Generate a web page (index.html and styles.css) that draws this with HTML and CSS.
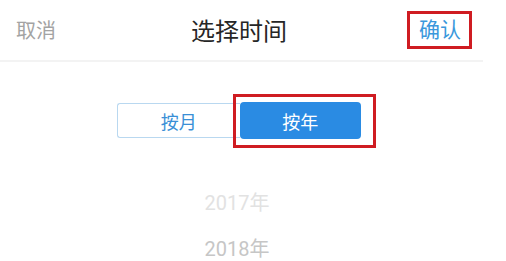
FILE: index.html
```html
<!DOCTYPE html>
<html lang="zh-CN">
<head>
<meta charset="utf-8">
<title>选择时间</title>
<link rel="stylesheet" href="styles.css">
</head>
<body>
<div class="sheet">
  <header class="bar">
    <span class="cancel">取消</span>
    <span class="title">选择时间</span>
    <span class="confirm-wrap"><span class="confirm">确认</span></span>
  </header>
  <div class="seg-row">
    <div class="seg">
      <span class="seg-item">按月</span>
      <span class="seg-item active">按年<span class="mark"></span></span>
    </div>
  </div>
  <ul class="years">
    <li class="y1">2017年</li>
    <li class="y2">2018年</li>
  </ul>
</div>
</body>
</html>
```
FILE: styles.css
```css
html, body {
  margin: 0;
  padding: 0;
  background: #ffffff;
  overflow: hidden;
}
body {
  font-family: Roboto, "Noto Sans CJK SC", sans-serif;
}
.sheet {
  width: 478px;
}
.bar {
  display: grid;
  grid-template-columns: 1fr auto 1fr;
  align-items: center;
  box-sizing: border-box;
  height: 62px;
  border-bottom: 2px solid #f3f3f3;
  margin-right: -5px;
  padding-right: 5px;
}
.cancel {
  font-size: 20px;
  color: #a3a3a3;
  margin-top: -1px;
  padding-left: 16px;
}
.title {
  font-size: 24px;
  color: #262626;
  margin-top: -1px;
}
.confirm-wrap {
  justify-self: end;
  padding-right: 6px;
}
.confirm {
  display: inline-block;
  font-size: 21px;
  line-height: 26px;
  color: #3a98dc;
  border: 3px solid #cf1c22;
  padding: 3px 8px 3px 9px;
}
.seg-row {
  display: flex;
  justify-content: center;
  padding-top: 40px;
}
.seg {
  display: flex;
  width: 244px;
  height: 37px;
}
.seg-item {
  flex: 1;
  display: flex;
  align-items: center;
  justify-content: center;
  font-size: 18px;
  color: #3a8fd6;
  border: 1px solid #b9d8f0;
  border-right: none;
  border-radius: 3px 0 0 3px;
  box-sizing: border-box;
  margin: 1px 0;
}
.seg-item.active {
  position: relative;
  margin: 0;
  background: #2a8be3;
  border: none;
  border-radius: 4px;
  color: #ffffff;
}
.mark {
  position: absolute;
  left: -7px;
  top: -8px;
  right: -15px;
  bottom: -9px;
  border: 3px solid #cf1c22;
}
.years {
  list-style: none;
  margin: 0;
  padding: 41px 0 0 0;
  text-align: center;
}
.years li {
  font-size: 20px;
  line-height: 46px;
  height: 46px;
  padding-right: 4px;
}
.y1 { color: #e2e2e2; }
.y2 { color: #c6c6c6; }
```
